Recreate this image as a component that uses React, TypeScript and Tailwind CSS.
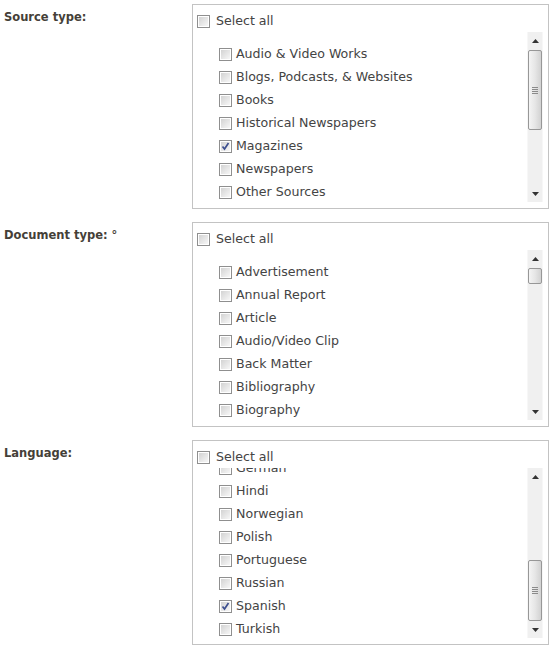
import React from "react";

type Item = { label: string; checked?: boolean };

type Section = {
  title: string;
  items: Item[];
  scrollOffset: string; // class for scrolled list position
  thumbTop: number;
  thumbHeight: number;
};

const sections: Section[] = [
  {
    title: "Source type:",
    scrollOffset: "pt-[10px]",
    thumbTop: 1,
    thumbHeight: 80,
    items: [
      { label: "Audio & Video Works" },
      { label: "Blogs, Podcasts, & Websites" },
      { label: "Books" },
      { label: "Historical Newspapers" },
      { label: "Magazines", checked: true },
      { label: "Newspapers" },
      { label: "Other Sources" },
    ],
  },
  {
    title: "Document type: °",
    scrollOffset: "pt-[10px]",
    thumbTop: 1,
    thumbHeight: 16,
    items: [
      { label: "Advertisement" },
      { label: "Annual Report" },
      { label: "Article" },
      { label: "Audio/Video Clip" },
      { label: "Back Matter" },
      { label: "Bibliography" },
      { label: "Biography" },
    ],
  },
  {
    title: "Language:",
    // list is scrolled down: German is mostly hidden under the top edge
    scrollOffset: "-mt-[12px]",
    thumbTop: 75,
    thumbHeight: 61,
    items: [
      { label: "German" },
      { label: "Hindi" },
      { label: "Norwegian" },
      { label: "Polish" },
      { label: "Portuguese" },
      { label: "Russian" },
      { label: "Spanish", checked: true },
      { label: "Turkish" },
    ],
  },
];

function Checkbox({ checked }: { checked?: boolean }) {
  return (
    <span className="w-[13px] h-[13px] shrink-0 border border-[#8f8f8f] bg-white p-px flex">
      <span className="flex-1 bg-gradient-to-br from-[#d3d3d3] to-[#f7f7f7] flex items-center justify-center">
        {checked && (
          <svg width="9" height="9" viewBox="0 0 9 9">
            <path d="M1.5 4.5 L3.5 7 L7.5 1" fill="none" stroke="#3d4f8f" strokeWidth="1.7" />
          </svg>
        )}
      </span>
    </span>
  );
}

function Arrow({ down }: { down?: boolean }) {
  return (
    <div className="h-[17px] flex items-center justify-center bg-[#f0f0f0]">
      <svg width="7" height="4" viewBox="0 0 7 4">
        <path d={down ? "M0 0 L7 0 L3.5 4 Z" : "M0 4 L7 4 L3.5 0 Z"} fill="#333" />
      </svg>
    </div>
  );
}

function Scrollbar({ top, height }: { top: number; height: number }) {
  return (
    <div className="w-[16px] flex flex-col bg-[#f0f0f0] border-x border-[#f7f7f7]">
      <Arrow />
      <div className="flex-1 flex flex-col">
        <div style={{ height: top }} />
        <div
          style={{ height }}
          className="rounded-[2px] border border-[#979797] bg-gradient-to-r from-[#f4f4f4] via-[#e6e6e6] to-[#d2d2d2] flex flex-col items-center justify-center gap-px"
        >
          {height > 30 &&
            [0, 1, 2, 3].map((i) => <span key={i} className="w-[6px] h-px bg-[#8a8a8a]" />)}
        </div>
      </div>
      <Arrow down />
    </div>
  );
}

function Row({ item }: { item: Item }) {
  return (
    <div className="h-[23px] pt-[2px] flex items-center gap-[4px]">
      <Checkbox checked={item.checked} />
      <span className="whitespace-nowrap">{item.label}</span>
    </div>
  );
}

function FilterBox({ section }: { section: Section }) {
  return (
    <div className="w-[357px] border border-[#c3c3c3] bg-white flex flex-col pt-[4px] pb-[6px]">
      <div className="h-[23px] pt-[2px] flex items-center gap-[6px] pl-[4px]">
        <Checkbox />
        <span>Select all</span>
      </div>
      <div className="h-[170px] flex pr-[5px]">
        <div className="flex-1 overflow-hidden pl-[26px]">
          <div className={section.scrollOffset}>
            {section.items.map((item) => (
              <Row key={item.label} item={item} />
            ))}
          </div>
        </div>
        <Scrollbar top={section.thumbTop} height={section.thumbHeight} />
      </div>
    </div>
  );
}

export default function App() {
  return (
    <div className="min-h-screen bg-white pt-[4px] pl-[4px] flex flex-col gap-[13px] text-[12.6px] text-[#444] font-['DejaVu_Sans',sans-serif]">
      {sections.map((section) => (
        <div key={section.title} className="flex">
          <div className="w-[188px] pt-[5px] text-[11.5px] leading-[16px] font-bold text-[#453f38]">
            {section.title}
          </div>
          <FilterBox section={section} />
        </div>
      ))}
    </div>
  );
}
